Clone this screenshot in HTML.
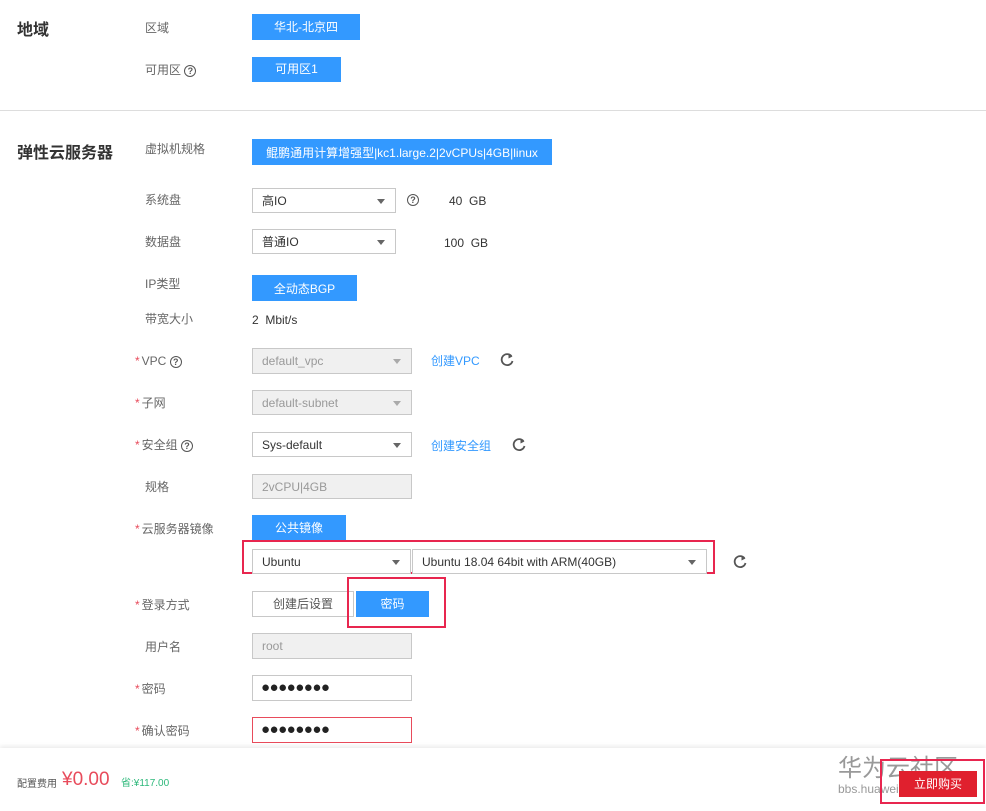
<!DOCTYPE html>
<html><head><meta charset="utf-8"><style>
*{margin:0;padding:0;box-sizing:border-box}
body{width:986px;height:811px;background:#fff;position:relative;overflow:hidden;font-family:"Liberation Sans","Noto Sans CJK SC",sans-serif;font-size:12px;color:#333}
.a{position:absolute}
.lb{position:absolute;left:145px;color:#666;font-size:12px;line-height:14px}
.st{color:#e84b5b;margin-left:-10px;margin-right:2px}
.t{position:absolute;left:17px;font-size:16px;font-weight:bold;color:#333}
.btn{position:absolute;background:#3399ff;color:#fff;text-align:center;font-size:12px}
.sel{position:absolute;border:1px solid #c8c8c8;background:#fff;font-size:12px;padding-left:9px;color:#333}
.sel.d{background:#f0f0f0;color:#999}
.sel .ar{position:absolute;right:10px;top:10px;width:0;height:0;border-left:4px solid transparent;border-right:4px solid transparent;border-top:5px solid #666}
.sel.d .ar{border-top-color:#aaa}
.q{display:inline-block;width:12px;height:12px;border:1.3px solid #555;border-radius:50%;font-size:9px;line-height:10px;text-align:center;font-weight:bold;color:#555;vertical-align:middle}
.lk{position:absolute;color:#3399ff;font-size:12px}
.rb{position:absolute;border:2px solid #e8264f}
.rf{position:absolute}
.dots{font-size:15px;letter-spacing:-0.5px;color:#222}
</style></head><body>
<div class="t" style="top:16px">地域</div>
<div class="lb" style="top:21px">区域</div>
<div class="btn" style="left:252px;top:14px;width:108px;height:26px;line-height:26px">华北-北京四</div>
<div class="lb" style="top:63px">可用区 <span class="q">?</span></div>
<div class="btn" style="left:252px;top:57px;width:89px;height:25px;line-height:25px">可用区1</div>
<div class="a" style="left:0;top:110px;width:986px;height:1px;background:#ddd"></div>

<div class="t" style="top:139px">弹性云服务器</div>
<div class="lb" style="top:142px">虚拟机规格</div>
<div class="btn" style="left:252px;top:139px;width:300px;height:26px;line-height:28px">鲲鹏通用计算增强型|kc1.large.2|2vCPUs|4GB|linux</div>

<div class="lb" style="top:193px">系统盘</div>
<div class="sel" style="left:252px;top:188px;width:144px;height:25px;line-height:24px">高IO<span class="ar"></span></div>
<div class="a" style="left:407px;top:192px"><span class="q">?</span></div>
<div class="a" style="left:449px;top:194px">40&nbsp; GB</div>

<div class="lb" style="top:235px">数据盘</div>
<div class="sel" style="left:252px;top:229px;width:144px;height:25px;line-height:24px">普通IO<span class="ar"></span></div>
<div class="a" style="left:444px;top:236px">100&nbsp; GB</div>

<div class="lb" style="top:277px">IP类型</div>
<div class="btn" style="left:252px;top:275px;width:105px;height:26px;line-height:28px">全动态BGP</div>
<div class="lb" style="top:312px">带宽大小</div>
<div class="a" style="left:252px;top:313px">2&nbsp; Mbit/s</div>

<svg width="0" height="0" style="position:absolute"><defs><g id="rf"><path d="M11.5 4.2A5.5 5.5 0 1 0 12.5 9" fill="none" stroke="#555" stroke-width="1.8"/><path d="M8.5 1.5L12.5 4.5L8.5 6.5Z" fill="#555"/></g></defs></svg>
<div class="lb" style="top:354px"><span class="st">*</span>VPC <span class="q">?</span></div>
<div class="sel d" style="left:252px;top:348px;width:160px;height:26px;line-height:25px">default_vpc<span class="ar"></span></div>
<div class="lk" style="left:431px;top:352px">创建VPC</div>
<svg class="rf" style="left:500px;top:352px" width="15" height="15"><use href="#rf"/></svg>

<div class="lb" style="top:396px"><span class="st">*</span>子网</div>
<div class="sel d" style="left:252px;top:390px;width:160px;height:25px;line-height:24px">default-subnet<span class="ar"></span></div>

<div class="lb" style="top:438px"><span class="st">*</span>安全组 <span class="q">?</span></div>
<div class="sel" style="left:252px;top:432px;width:160px;height:25px;line-height:24px">Sys-default<span class="ar"></span></div>
<div class="lk" style="left:431px;top:437px">创建安全组</div>
<svg class="rf" style="left:512px;top:437px" width="15" height="15"><use href="#rf"/></svg>

<div class="lb" style="top:480px">规格</div>
<div class="sel d" style="left:252px;top:474px;width:160px;height:25px;line-height:24px">2vCPU|4GB</div>

<div class="lb" style="top:522px"><span class="st">*</span>云服务器镜像</div>
<div class="btn" style="left:252px;top:515px;width:94px;height:26px;line-height:26px">公共镜像</div>
<div class="rb" style="left:242px;top:540px;width:473px;height:34px"></div>
<div class="sel" style="left:252px;top:549px;width:159px;height:25px;line-height:24px">Ubuntu<span class="ar"></span></div>
<div class="sel" style="left:412px;top:549px;width:295px;height:25px;line-height:24px">Ubuntu 18.04 64bit with ARM(40GB)<span class="ar"></span></div>
<svg class="rf" style="left:733px;top:554px" width="15" height="15"><use href="#rf"/></svg>

<div class="lb" style="top:598px"><span class="st">*</span>登录方式</div>
<div class="sel" style="left:252px;top:591px;width:102px;height:26px;line-height:25px;padding-left:0;text-align:center;color:#555">创建后设置</div>
<div class="btn" style="left:356px;top:591px;width:73px;height:26px;line-height:26px">密码</div>
<div class="rb" style="left:347px;top:577px;width:99px;height:51px"></div>

<div class="lb" style="top:640px">用户名</div>
<div class="sel d" style="left:252px;top:633px;width:160px;height:26px;line-height:25px">root</div>
<div class="lb" style="top:682px"><span class="st">*</span>密码</div>
<div class="sel" style="left:252px;top:675px;width:160px;height:26px;line-height:24px;padding-left:8px"><span class="dots">●●●●●●●●</span></div>
<div class="lb" style="top:724px"><span class="st">*</span>确认密码</div>
<div class="sel" style="left:252px;top:717px;width:160px;height:26px;line-height:24px;padding-left:8px;border-color:#e84b5b"><span class="dots">●●●●●●●●</span></div>

<div class="a" style="left:0;top:748px;width:986px;height:63px;background:#fff;box-shadow:0 -2px 4px rgba(0,0,0,0.08)"></div>
<div class="a" style="left:17px;top:775px;font-size:10px;color:#555">配置费用</div>
<div class="a" style="left:62px;top:769px;font-size:19px;color:#e84b5b">¥0.00</div>
<div class="a" style="left:121px;top:774px;font-size:10px;color:#2cb87a">省:¥117.00</div>
<div class="a" style="left:838px;top:748px;font-size:24px;color:#999">华为云社区</div>
<div class="a" style="left:838px;top:782px;font-size:12px;color:#999">bbs.huaweicloud.com</div>
<div class="a" style="left:899px;top:771px;width:78px;height:26px;background:#e0202e;color:#fff;text-align:center;line-height:26px;font-size:12px">立即购买</div>
<div class="rb" style="left:880px;top:759px;width:105px;height:45px"></div>
</body></html>
